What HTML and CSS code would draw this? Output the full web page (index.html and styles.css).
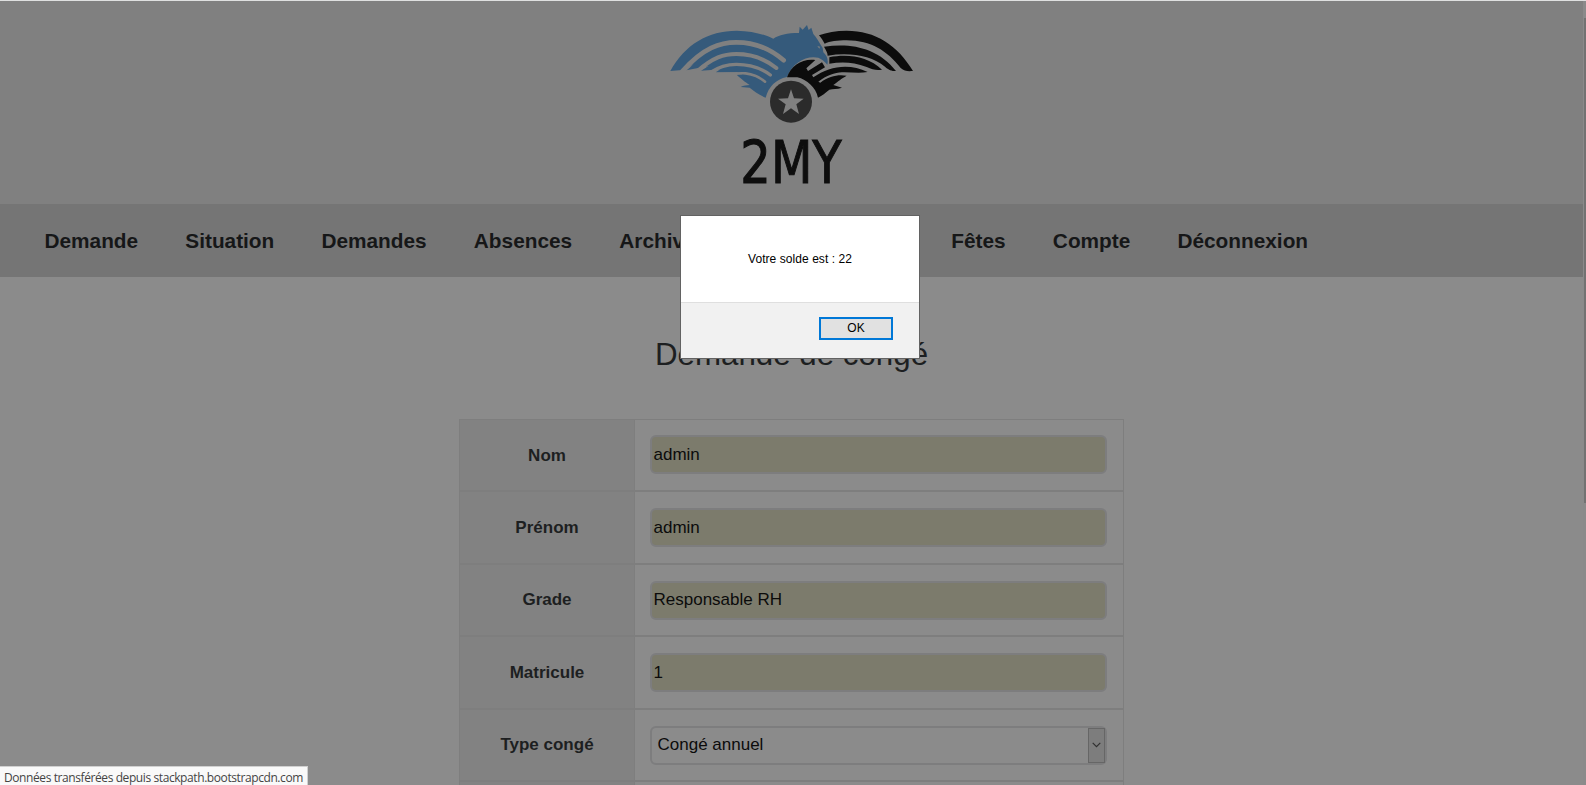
FILE: index.html
```html
<!DOCTYPE html>
<html lang="fr">
<head>
<meta charset="utf-8">
<title>Demande de congé</title>
<link rel="stylesheet" href="styles.css">
</head>
<body>
<div class="page">
  <header class="header">
    <svg class="logo" viewBox="0 0 810 570" role="img" aria-label="2MY">
      <!-- left wing, body and head -->
      <path fill="#355a7b" d="M31 183C75 103 145 62 230 62C277 63 313 73 340 86C357 75 381 69 417 69L419 50L428 59L441 45L446 60L454 53L460 72C468 80 477 96 488 114L490 127C500 136 506 149 502 164C494 154 485 147 475 143C440 135 397 158 381 201C347 208 326 230 317 263C297 255 281 242 269 233L242 231C250 226 260 226 269 225C253 214 245 208 230 194C250 190 283 191 318 217L230 187L167 187C175 182 180 177 185 178L122 182C132 178 139 172 146 168L79 181C90 174 94 168 102 160C89 171 74 184 58 181Z"/>
      <g fill="none" stroke="#808080" stroke-linecap="round">
        <path stroke-width="14" d="M67 184C130 112 182 97 229 97C285 97 333 118 371 151"/>
        <path stroke-width="12" d="M110 185C160 142 191 132 229 132C273 132 314 146 349 174"/>
        <path stroke-width="10" d="M151 187C180 168 205 163 229 163C268 163 303 174 331 195"/>
        <path stroke-width="8" d="M168 192C211 192 234 189 257 190C282 193 300 202 315 215"/>
      </g>
      <path fill="#808080" d="M472 108L480 110L478 116Z"/>
      <!-- right wing -->
      <g fill="#0c0c0c">
        <path d="M477 76C500 67 528 62 560 62C646 62 713 105 759 183C744 184 733 184 722 174C681 122 634 92 560 91C531 91 510 94 494 101C489 92 484 84 477 76Z"/>
        <path d="M492 110C571 98 653 112 708 183C694 183 686 180 675 170C635 137 569 126 503 137C503 127 496 118 492 110Z"/>
        <path d="M508 142C563 131 624 139 666 179C649 181 637 179 620 171C579 155 543 155 508 161Z"/>
        <path d="M381 202C393 165 428 145 466 150L439 175L444 183L486 157L495 172L456 195L460 202C510 166 570 160 623 186C597 191 571 186 546 187C524 189 500 196 475 215L481 218C508 196 538 193 560 197C543 207 535 213 520 225L546 233C530 238 519 236 508 239C496 248 487 257 474 263C467 232 441 209 412 202Z"/>
      </g>
      <circle cx="393" cy="275" r="63" fill="#2b2b2b"/>
      <path fill="#808080" d="M393 238L402 265L431 266L409 283L417 312L393 295L369 312L377 283L354 266L384 265Z"/>
      <text class="logo-name" x="241" y="518" textLength="304" lengthAdjust="spacingAndGlyphs">2MY</text>
    </svg>
  </header>
  <nav class="nav">
    <a>Demande</a><a>Situation</a><a>Demandes</a><a>Absences</a><a>Archives</a><a class="nav-after">Fêtes</a><a>Compte</a><a>Déconnexion</a>
  </nav>
  <main class="main">
    <h1 class="title">Demande de congé</h1>
    <div class="form">
      <div class="row"><div class="label">Nom</div><div class="cell"><div class="field">admin</div></div></div>
      <div class="row"><div class="label">Prénom</div><div class="cell"><div class="field">admin</div></div></div>
      <div class="row"><div class="label">Grade</div><div class="cell"><div class="field">Responsable RH</div></div></div>
      <div class="row"><div class="label">Matricule</div><div class="cell"><div class="field">1</div></div></div>
      <div class="row"><div class="label">Type congé</div><div class="cell"><div class="field select"><span>Congé annuel</span><span class="arrow"><svg width="9" height="6" viewBox="0 0 9 6"><path d="M.7.8L4.5 4.6L8.3.8" fill="none" stroke="#303030" stroke-width="1.2"/></svg></span></div></div></div>
      <div class="row"><div class="label"></div><div class="cell"></div></div>
    </div>
  </main>
</div>
<div class="scrollbar"><div class="thumb"></div></div>
<div class="dialog">
  <div class="message">Votre solde est : 22</div>
  <div class="actions"><div class="ok">OK</div></div>
</div>
<div class="status"><span>Données transférées depuis stackpath.bootstrapcdn.com</span></div>
</body>
</html>
```
FILE: styles.css
```css
* { box-sizing: border-box; }
body {
  margin: 0;
  height: 785px;
  overflow: hidden;
  display: flex;
  position: relative;
  background: #8b8b8b;
  border-top: 1px solid #dfe0e0;
  font-family: "Liberation Sans", Arial, sans-serif;
  font-size: 17px;
  color: #1d1f21;
}
.page { width: 1583px; height: 784px; overflow: hidden; }
.header { height: 203px; background: #808080; padding: 9px 0 0 660px; }
.logo { display: block; width: 270px; height: 190px; }
.logo-name {
  font-family: "DejaVu Sans Condensed", "DejaVu Sans", sans-serif;
  font-size: 175px;
  fill: #0e0e0e;
  stroke: #0e0e0e;
  stroke-width: 3;
}
.nav {
  height: 73px;
  background: #757575;
  display: flex;
  align-items: center;
  gap: 47.2px;
  padding-left: 44.5px;
  font-size: 20.8px;
  font-weight: bold;
  color: #161718;
}
.nav-after { margin-left: 197px; }
.title {
  margin: 0;
  padding-top: 59px;
  text-align: center;
  font-size: 31.3px;
  line-height: 38px;
  font-weight: normal;
}
.form {
  width: 665px;
  margin: 45px auto 0;
  border: 1px solid #7e7e7e;
}
.row {
  height: 72.5px;
  display: grid;
  grid-template-columns: 175px 1fr;
  border-bottom: 2px solid #7e7e7e;
}
.row:first-child { height: 72px; }
.row:first-child .cell { padding-top: 15px; }
.label {
  background: #828282;
  border-right: 1px solid #7e7e7e;
  display: flex;
  align-items: center;
  justify-content: center;
  padding-top: 1px;
  font-weight: bold;
}
.cell { padding: 16px 16px 0 14.5px; }
.field {
  height: 39px;
  border: 2px solid #7d7d7e;
  border-radius: 6px;
  background: #7c7b6c;
  color: #0b0b0b;
  padding-left: 2px;
  display: flex;
  align-items: center;
}
.select { background: #8b8b8b; padding-left: 6px; justify-content: space-between; }
.arrow {
  width: 17px;
  height: 35px;
  border: 1px solid #666;
  background: #7d7d7d;
  display: flex;
  align-items: center;
  justify-content: center;
}
.scrollbar { width: 3px; padding: 17px 0 0 1px; background: #8a8a8a; }
.thumb { height: 485px; background: #727272; }
.dialog {
  position: absolute;
  left: 680px;
  top: 214px;
  width: 240px;
  height: 144px;
  border: 1px solid #626262;
  background: #fff;
  color: #000;
  font-size: 12px;
}
.message { height: 86px; line-height: 86px; text-align: center; letter-spacing: .06px; }
.actions {
  height: 56px;
  border-top: 1px solid #dfdfdf;
  background: #f1f1f1;
  display: flex;
  justify-content: flex-end;
  padding: 14px 26px 0 0;
}
.ok {
  width: 74px;
  height: 23px;
  border: 2px solid #0078d7;
  background: #e1e1e1;
  text-align: center;
  line-height: 18px;
}
.status {
  position: absolute;
  left: 0;
  bottom: 0;
  width: 308px;
  height: 19px;
  background: #f9f9f9;
  border-top: 1px solid #d0d0d0;
  border-right: 1px solid #d0d0d0;
  padding-left: 4px;
  font: 12px/21px "Open Sans", "Noto Sans", sans-serif;
  letter-spacing: -.41px;
  color: #444;
  white-space: nowrap;
}
```
